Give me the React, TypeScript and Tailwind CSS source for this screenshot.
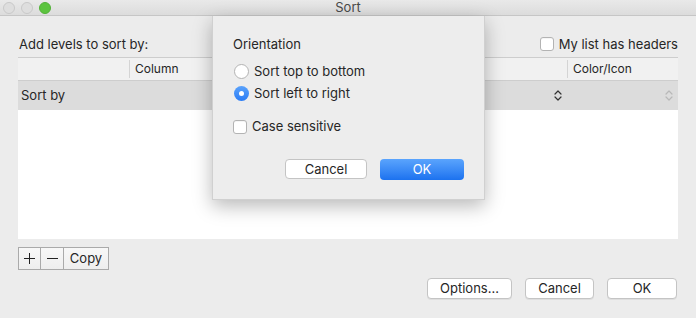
import { ReactElement } from 'react';

const font = { fontFamily: 'Inter, "Liberation Sans", sans-serif' };

const UpDown = ({ light }: { light?: boolean }): ReactElement => (
  <svg width="8" height="11" viewBox="0 0 8 11" fill="none">
    <path
      d="M1 4 L4 1 L7 4 M1 7 L4 10 L7 7"
      stroke={light ? '#b8b8b8' : '#333'}
      strokeWidth="1.2"
      strokeLinecap="round"
      strokeLinejoin="round"
    />
  </svg>
);

const Checkbox = (): ReactElement => (
  <span className="block w-[14px] h-[14px] rounded-[3px] border border-[#b3b3b3] bg-white shadow-[inset_0_1px_0_rgba(0,0,0,0.04)]" />
);

const Radio = ({ checked }: { checked?: boolean }): ReactElement =>
  checked ? (
    <span className="flex items-center justify-center w-[15px] h-[15px] rounded-full bg-gradient-to-b from-[#5aa2fb] to-[#2a7cf5]">
      <span className="w-[5px] h-[5px] rounded-full bg-white" />
    </span>
  ) : (
    <span className="block w-[15px] h-[15px] rounded-full border border-[#b3b3b3] bg-white" />
  );

const PushButton = ({
  label,
  width,
}: {
  label: string;
  width: string;
}): ReactElement => (
  <button
    type="button"
    className={`${width} h-[21px] rounded-[4px] border border-[#c4c4c4] bg-white text-[13px] text-[#262626] shadow-[0_1px_0_rgba(0,0,0,0.06)]`}
  >
    {label}
  </button>
);

const TrafficLight = ({ green }: { green?: boolean }): ReactElement => (
  <span
    className={
      green
        ? 'block w-[12px] h-[12px] rounded-full bg-[#5cc43f] border border-[#52b138]'
        : 'block w-[12px] h-[12px] rounded-full bg-[#dedede] border border-[#c9c9c9]'
    }
  />
);

export default function App(): ReactElement {
  return (
    <div
      className="relative w-[696px] h-[318px] overflow-hidden bg-[#ececec] text-[#262626]"
      style={font}
    >
      {/* title bar */}
      <div className="relative flex items-center h-[16px] px-[3px] gap-[6px] bg-gradient-to-b from-[#e9e9e9] to-[#dcdcdc] border-b border-[#c6c6c6]">
        <TrafficLight />
        <TrafficLight />
        <TrafficLight green />
        <span className="absolute inset-0 flex items-center justify-center text-[13px] text-[#4a4a4a]">
          Sort
        </span>
      </div>

      <div className="flex flex-col px-[18px]">
        <div className="flex items-end justify-between h-[41px] pb-[5px]">
          <span className="text-[13px] leading-[16px] pl-[1px]">Add levels to sort by:</span>
          <label className="flex items-center gap-[5px] text-[13px] leading-[16px]">
            <Checkbox />
            <span>My list has headers</span>
          </label>
        </div>

        {/* table */}
        <div className="flex flex-col">
          <div className="flex h-[24px] items-center bg-[#f1f1f1] border-t border-b border-[#cdcdcd] text-[12px]">
            <div className="w-[111px] h-full" />
            <div className="w-[171px] h-[18px] border-l border-[#d4d4d4] pl-[5px] flex items-center">
              Column
            </div>
            <div className="w-[140px] h-[18px] border-l border-[#d4d4d4]" />
            <div className="w-[127px] h-[18px] border-l border-[#d4d4d4]" />
            <div className="flex-1 h-[18px] border-l border-[#d4d4d4] pl-[5px] flex items-center">
              Color/Icon
            </div>
          </div>
          <div className="flex h-[29px] items-center bg-[#dcdcdc] text-[13px]">
            <div className="w-[111px] pl-[3px]">Sort by</div>
            <div className="flex-1" />
            <div className="w-[8px] mr-[103px]">
              <UpDown />
            </div>
            <div className="w-[8px] mr-[5px]">
              <UpDown light />
            </div>
          </div>
          <div className="h-[129px] bg-white" />
        </div>

        <div className="flex mt-[8px] h-[23px] w-max border border-[#aaaaaa] bg-gradient-to-b from-[#f8f8f8] to-[#eeeeee] text-[13px]">
          <div className="w-[22px] flex items-center justify-center border-r border-[#aaaaaa]">
            <svg width="11" height="11" viewBox="0 0 11 11">
              <path d="M5.5 0 V11 M0 5.5 H11" stroke="#222" strokeWidth="1" />
            </svg>
          </div>
          <div className="w-[23px] flex items-center justify-center border-r border-[#aaaaaa]">
            <svg width="11" height="11" viewBox="0 0 11 11">
              <path d="M0 5.5 H11" stroke="#222" strokeWidth="1" />
            </svg>
          </div>
          <div className="w-[44px] flex items-center justify-center">Copy</div>
        </div>

        <div className="flex justify-end gap-[13px] mt-[8px] pr-[1px]">
          <PushButton label="Options..." width="w-[85px]" />
          <PushButton label="Cancel" width="w-[69px]" />
          <PushButton label="OK" width="w-[70px]" />
        </div>
      </div>

      {/* sheet */}
      <div className="absolute left-[212px] top-[16px] w-[273px] h-[184px] bg-[#ededed] border-x border-b border-[#d0d0d0] shadow-[0_6px_18px_rgba(0,0,0,0.28)] flex flex-col px-[20px] pt-[20px] pb-[19px]">
        <div className="text-[13px] leading-[16px]">Orientation</div>
        <div className="flex flex-col gap-[7px] mt-[12px] pl-[1px]">
          <label className="flex items-center gap-[5px] text-[13px] leading-[15px]">
            <Radio />
            <span>Sort top to bottom</span>
          </label>
          <label className="flex items-center gap-[5px] text-[13px] leading-[15px]">
            <Radio checked />
            <span>Sort left to right</span>
          </label>
        </div>
        <label className="flex items-center gap-[5px] mt-[18px] text-[13px] leading-[15px]">
          <Checkbox />
          <span>Case sensitive</span>
        </label>
        <div className="flex-1" />
        <div className="flex justify-end items-end gap-[13px]">
          <button
            type="button"
            className="w-[82px] h-[20px] mb-[1px] rounded-[4px] border border-[#c4c4c4] bg-white text-[13px] text-[#262626]"
          >
            Cancel
          </button>
          <button
            type="button"
            className="w-[84px] h-[21px] rounded-[4px] bg-gradient-to-b from-[#5aa4fd] to-[#1b72ef] text-[13px] text-white"
          >
            OK
          </button>
        </div>
      </div>
    </div>
  );
}
